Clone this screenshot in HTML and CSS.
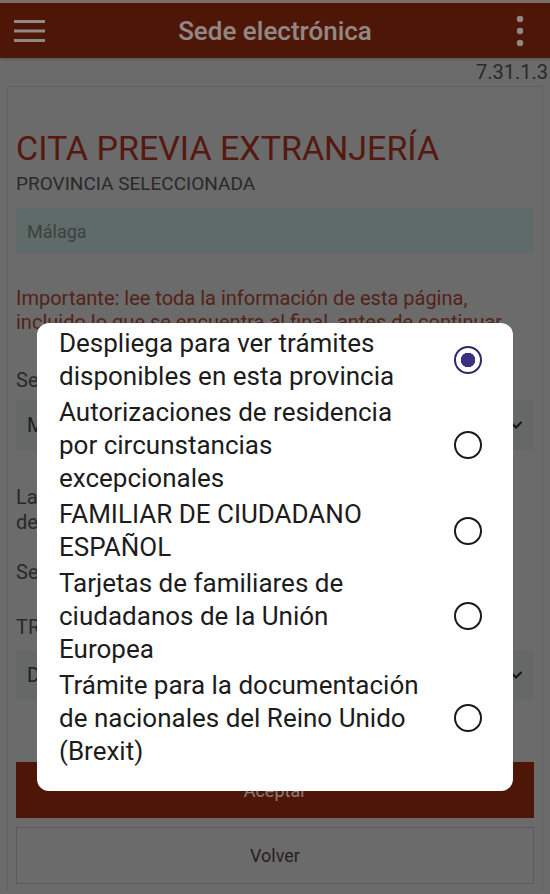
FILE: index.html
```html
<!DOCTYPE html>
<html lang="es">

<head>
  <meta charset="UTF-8">
  <meta name="viewport" content="width=device-width, initial-scale=1.0">
  <title>Sede electrónica</title>
  <link rel="stylesheet" href="styles.css">
</head>

<body>
  <div class="statusbar"></div>

  <header class="appbar">
    <svg class="appbar-icon" width="32" height="24" viewBox="0 0 32 24">
      <rect x="0" y="1" width="31" height="3" fill="currentColor"/>
      <rect x="0" y="10.5" width="31" height="3" fill="currentColor"/>
      <rect x="0" y="20" width="31" height="3" fill="currentColor"/>
    </svg>
    <h1 class="appbar-title">Sede electrónica</h1>
    <svg class="appbar-icon appbar-more" width="8" height="32" viewBox="0 0 8 32">
      <circle cx="4" cy="4" r="3.2" fill="currentColor"/>
      <circle cx="4" cy="16" r="3.2" fill="currentColor"/>
      <circle cx="4" cy="28" r="3.2" fill="currentColor"/>
    </svg>
  </header>

  <div class="version">7.31.1.3</div>

  <main class="card">
    <h2 class="page-title">CITA PREVIA EXTRANJERÍA</h2>
    <div class="subtitle">PROVINCIA SELECCIONADA</div>
    <div class="field field-readonly">Málaga</div>

    <p class="notice">Importante: lee toda la información de esta página, incluido lo que se encuentra al final, antes de continuar.</p>

    <div class="label label-first">Selecciona el trámite</div>
    <div class="field field-select">
      <span class="field-value">Modificar</span>
      <svg class="chevron" width="14" height="10" viewBox="0 0 14 10"><path d="M1.5 2l5.5 5.5 5.5-5.5" fill="none" stroke="currentColor" stroke-width="2"/></svg>
    </div>

    <p class="text">La cita se solicitará en la oficina que elijas en la pantalla de la derecha, de entre las disponibles.</p>

    <div class="label label-second">Selecciona un solo trámite</div>
    <div class="label label-third">TRÁMITES OFICINAS DE EXTRANJERÍA</div>
    <div class="field field-select field-last">
      <span class="field-value">Despliega para ver trámites disponibles en esta provincia</span>
      <svg class="chevron" width="14" height="10" viewBox="0 0 14 10"><path d="M1.5 2l5.5 5.5 5.5-5.5" fill="none" stroke="currentColor" stroke-width="2"/></svg>
    </div>

    <button class="btn btn-primary">Aceptar</button>
    <button class="btn btn-secondary">Volver</button>
  </main>

  <!-- opened select list -->
  <div class="scrim">
    <div class="dialog">
      <label class="option">
        <span class="option-text">Despliega para ver trámites disponibles en esta provincia</span>
        <span class="radio radio-checked"></span>
      </label>
      <label class="option">
        <span class="option-text">Autorizaciones de residencia por circunstancias excepcionales</span>
        <span class="radio"></span>
      </label>
      <label class="option">
        <span class="option-text">FAMILIAR DE CIUDADANO ESPAÑOL</span>
        <span class="radio"></span>
      </label>
      <label class="option">
        <span class="option-text">Tarjetas de familiares de ciudadanos de la Unión Europea</span>
        <span class="radio"></span>
      </label>
      <label class="option">
        <span class="option-text">Trámite para la documentación de nacionales del Reino Unido (Brexit)</span>
        <span class="radio"></span>
      </label>
    </div>
  </div>
</body>

</html>
```

FILE: styles.css
```css
body {
  margin: 0;
  font-family: Roboto, "Noto Sans", sans-serif;
  background-color: #b2b2b2;
  color: #464646;
  overflow: hidden;
}

.statusbar {
  height: 3px;
  background-color: #cbb7b1;
}

.appbar {
  height: 55px;
  padding: 0 14px;
  display: grid;
  grid-template-columns: 1fr auto 1fr;
  align-items: center;
  background-color: #82260c;
  color: #f2e2dc;
  box-shadow: 0 2px 2px rgba(0, 0, 0, 0.15);
}

.appbar-title {
  margin: 0;
  font-size: 26px;
  font-weight: 500;
}

.appbar-icon {
  display: block;
}

.appbar-more {
  justify-self: end;
  margin-right: 12px;
}

.version {
  height: 28px;
  line-height: 28px;
  padding-right: 2px;
  text-align: right;
  font-size: 20px;
}

.card {
  margin: 0 7px;
  padding: 0 8px 6px;
  border: 1px solid #a4a4a4;
  border-bottom: none;
}

.page-title {
  margin: 41px 0 5px;
  font-size: 34px;
  line-height: 40px;
  font-weight: 400;
  color: #8e2a1c;
}

.subtitle {
  font-size: 19px;
  line-height: 22px;
}

.field {
  margin-top: 13px;
  height: 46px;
  padding: 0 11px;
  display: flex;
  align-items: center;
  justify-content: space-between;
  gap: 12px;
  background-color: #9eb2ad;
  color: #646e6b;
  font-size: 18px;
}

.field-select {
  height: 50px;
  margin-top: 8px;
  background-color: #a7aeac;
  color: #333;
  font-size: 20px;
}

.field-value {
  min-width: 0;
  white-space: nowrap;
  overflow: hidden;
  text-overflow: ellipsis;
}

.field-last {
  margin-top: 11px;
}

.chevron {
  flex-shrink: 0;
  color: #222;
}

.notice {
  margin: 32px 0 0;
  font-size: 20px;
  line-height: 24px;
  color: #8a392b;
}

.label {
  font-size: 20px;
  line-height: 24px;
}

.label-first {
  margin-top: 34px;
}

.label-second {
  margin-top: 25px;
}

.label-third {
  margin-top: 31px;
}

.text {
  margin: 35px 0 0;
  font-size: 20px;
  line-height: 25px;
}

.btn {
  display: block;
  width: 100%;
  font-family: inherit;
  font-size: 18px;
}

.btn-primary {
  margin-top: 62px;
  height: 56px;
  border: none;
  background-color: #82260c;
  color: #e6cbc3;
}

.btn-secondary {
  margin-top: 9px;
  height: 57px;
  border: 1px solid #9d8fa0;
  background-color: #b2b2b2;
  color: #453535;
}

.scrim {
  position: fixed;
  inset: 0;
  background-color: rgba(0, 0, 0, 0.4);
}

.dialog {
  position: absolute;
  top: 323px;
  left: 37px;
  width: 476px;
  box-sizing: border-box;
  padding: 2px 31px 22px 22px;
  background-color: #fff;
  border-radius: 12px;
}

.option {
  display: flex;
  align-items: center;
  padding: 1.5px 0;
}

.option-text {
  width: 363px;
  font-size: 26px;
  line-height: 33px;
  color: #1c1c1c;
}

.radio {
  margin-left: auto;
  width: 28px;
  height: 28px;
  box-sizing: border-box;
  border: 2.5px solid #1a1a1a;
  border-radius: 50%;
  flex-shrink: 0;
}

.radio-checked {
  border-color: #2e2a66;
  background: radial-gradient(circle, #3a3280 0 7px, transparent 7.5px);
}
```
